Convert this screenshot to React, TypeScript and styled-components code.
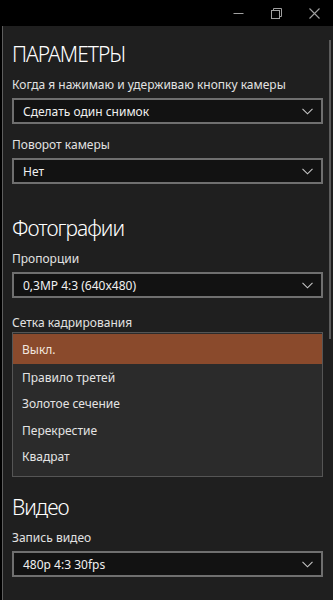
import styled, { createGlobalStyle } from "styled-components";

const GlobalStyle = createGlobalStyle`
  html, body {
    margin: 0;
    padding: 0;
    background: #000000;
  }
  body {
    font-family: "Noto Sans", "Open Sans", sans-serif;
    -webkit-font-smoothing: antialiased;
  }
`;

const gridOptions = [
  "Выкл.",
  "Правило третей",
  "Золотое сечение",
  "Перекрестие",
  "Квадрат",
];

function Chevron() {
  return (
    <svg width="11" height="7" viewBox="0 0 11 7">
      <polyline points="0.5,0.8 5.5,5.8 10.5,0.8" fill="none" stroke="#c4c4c4" strokeWidth="1.1" />
    </svg>
  );
}

function Select({ value }: { value: string }) {
  return (
    <SelectBox>
      <span>{value}</span>
      <Chevron />
    </SelectBox>
  );
}

function App() {
  return (
    <Window>
      <GlobalStyle />
      <TitleBar>
        <CaptionButton>
          <svg width="11" height="11" viewBox="0 0 11 11">
            <line x1="0.5" y1="5.5" x2="10.5" y2="5.5" stroke="#a0a0a0" strokeWidth="1" />
          </svg>
        </CaptionButton>
        <CaptionButton>
          <svg width="11" height="11" viewBox="0 0 11 11">
            <rect x="0.5" y="2.5" width="8" height="8" fill="none" stroke="#a0a0a0" strokeWidth="1" />
            <path d="M2.5 2.5 V0.5 H10.5 V8.5 H8.5" fill="none" stroke="#a0a0a0" strokeWidth="1" />
          </svg>
        </CaptionButton>
        <CaptionButton>
          <svg width="11" height="11" viewBox="0 0 11 11">
            <path d="M0.5 0.5 L10.5 10.5 M10.5 0.5 L0.5 10.5" fill="none" stroke="#a0a0a0" strokeWidth="1.1" />
          </svg>
        </CaptionButton>
      </TitleBar>
      <Panel>
        <Content>
          <Heading $top={14}>ПАРАМЕТРЫ</Heading>
          <Label $top={8}>Когда я нажимаю и удерживаю кнопку камеры</Label>
          <Select value="Сделать один снимок" />
          <Label $top={12}>Поворот камеры</Label>
          <Select value="Нет" />

          <Heading $top={30}>Фотографии</Heading>
          <Label $top={8}>Пропорции</Label>
          <Select value="0,3MP 4:3 (640x480)" />
          <Label $top={16}>Сетка кадрирования</Label>
          <OptionList>
            {gridOptions.map((o, i) => (
              <OptionItem key={o} $selected={i === 0}>
                {o}
              </OptionItem>
            ))}
          </OptionList>

          <Heading $top={16}>Видео</Heading>
          <Label $top={8}>Запись видео</Label>
          <Select value="480p 4:3 30fps" />
          <Label $top={19}>Подавление мерцания</Label>
        </Content>
        <ScrollThumb />
      </Panel>
    </Window>
  );
}

export default App;

const Window = styled.div`
  width: 333px;
  height: 600px;
  overflow: hidden;
  background: #000000;
  display: flex;
  flex-direction: column;
`;

const TitleBar = styled.div`
  height: 26px;
  flex-shrink: 0;
  display: flex;
  justify-content: flex-end;
  background: #000000;
`;

const CaptionButton = styled.div`
  width: 38px;
  height: 26px;
  display: flex;
  align-items: center;
  justify-content: center;
`;

const Panel = styled.div`
  position: relative;
  flex: 1;
  margin-left: 2px;
  border-left: 1px solid #5e5e5e;
  background: #1f1f1f;
  overflow: hidden;
`;

const Content = styled.div`
  display: flex;
  flex-direction: column;
  padding: 0 10px 0 9px;
`;

const Heading = styled.div<{ $top: number }>`
  margin-top: ${(p) => p.$top}px;
  font-size: 21px;
  font-weight: 300;
  line-height: 28px;
  letter-spacing: -1px;
  color: #ffffff;
`;

const Label = styled.div<{ $top: number }>`
  margin-top: ${(p) => p.$top}px;
  margin-bottom: 4px;
  font-size: 12px;
  line-height: 18px;
  color: #e2e2e2;
  white-space: nowrap;
`;

const SelectBox = styled.div`
  box-sizing: border-box;
  height: 26px;
  display: flex;
  align-items: center;
  justify-content: space-between;
  padding: 0 8px 0 9px;
  border: 2px solid #6f6f6f;
  background: #121212;
  font-size: 12px;
  color: #f0f0f0;
`;

const OptionList = styled.div`
  box-sizing: border-box;
  margin-top: -4px;
  height: 145px;
  padding: 1px 0;
  border: 1px solid #555555;
  background: #2b2b2b;
  display: flex;
  flex-direction: column;
`;

const OptionItem = styled.div<{ $selected?: boolean }>`
  height: ${(p) => (p.$selected ? 30 : 26.5)}px;
  display: flex;
  align-items: center;
  padding-left: 9px;
  font-size: 12px;
  color: ${(p) => (p.$selected ? "#f2e6df" : "#e4e4e4")};
  background: ${(p) => (p.$selected ? "#8a4a2c" : "transparent")};
`;

const ScrollThumb = styled.div`
  position: absolute;
  right: 2px;
  top: 14px;
  width: 2px;
  height: 299px;
  background: #5c5c5c;
`;
